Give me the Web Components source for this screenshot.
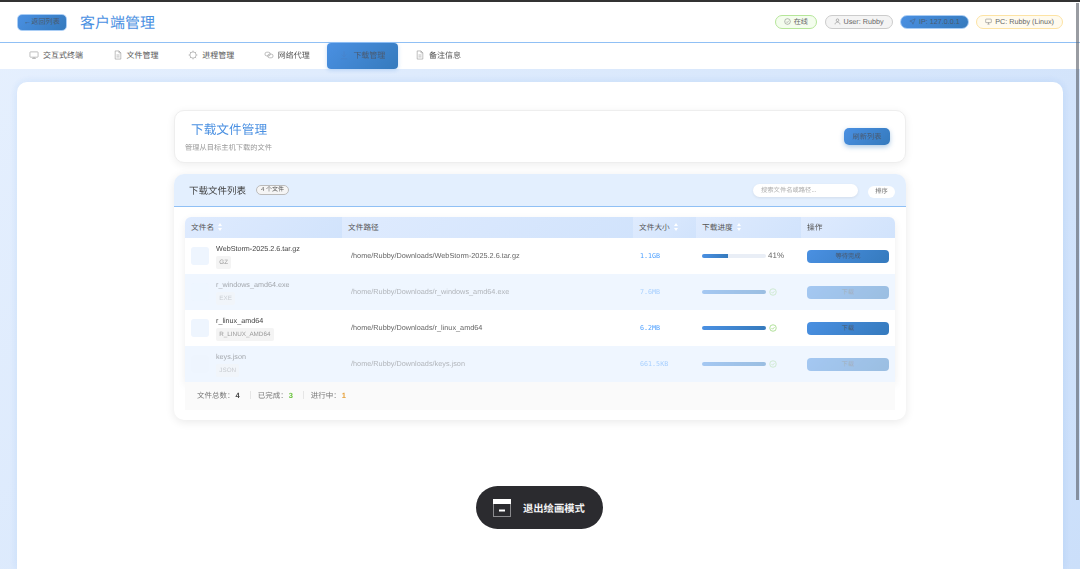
<!DOCTYPE html>
<html lang="zh-CN">
<head>
<meta charset="utf-8">
<title>客户端管理</title>
<style>
  html, body { margin: 0; height: 569px; overflow: hidden; }
  body {
    font-family: "Liberation Sans", "Noto Sans CJK SC", sans-serif;
    text-rendering: geometricPrecision;
    color: #333;
    background: linear-gradient(135deg, #e6f0fe, #cbdffa);
    border-top: 2px solid #333;
    box-sizing: border-box;
  }
</style>
</head>
<body>
<client-header></client-header>
<client-tabs></client-tabs>
<main-panel>
  <title-card></title-card>
  <list-card count="4 个文件">
    <file-row name="WebStorm-2025.2.6.tar.gz" ext="GZ" path="/home/Rubby/Downloads/WebStorm-2025.2.6.tar.gz" size="1.1GB" progress="41" action="等待完成"></file-row>
    <file-row muted name="r_windows_amd64.exe" ext="EXE" path="/home/Rubby/Downloads/r_windows_amd64.exe" size="7.6MB" progress="100" action="下载"></file-row>
    <file-row name="r_linux_amd64" ext="R_LINUX_AMD64" path="/home/Rubby/Downloads/r_linux_amd64" size="6.2MB" progress="100" action="下载"></file-row>
    <file-row muted name="keys.json" ext="JSON" path="/home/Rubby/Downloads/keys.json" size="661.5KB" progress="100" action="下载"></file-row>
  </list-card>
</main-panel>
<draw-pill></draw-pill>
<page-scrollbar></page-scrollbar>
<script>
/**
 * Small line icons, 16x16 viewBox, shared by the components.
 */
const icons = {
  monitor: '<rect x="1.5" y="3" width="13" height="8.500" rx="1"/><path d="M5 13.500h6M8 11.500v2"/>',
  doc: '<path d="M3.500 1.500h6l3 3v10h-9zM9.500 1.500v3h3M5.500 8h5M5.500 11h5"/>',
  chip: '<circle cx="8" cy="8" r="5"/><path d="M8 1v2M8 13v2M1 8h2M13 8h2M3 3l1.500 1.500M11.500 11.500L13 13M3 13l1.500-1.500M11.500 4.500L13 3"/>',
  link: '<rect x="1.500" y="3.500" width="8.500" height="6" rx="3"/><rect x="6" y="6.500" width="8.500" height="6" rx="3"/>',
  down: '<path d="M8 2v9M4.500 7.500L8 11l3.500-3.500M3 14h10"/>',
  check: '<circle cx="8" cy="8" r="6.500"/><path d="M5 8.200l2.200 2.200L11 6.300"/>',
  user: '<circle cx="8" cy="5" r="3"/><path d="M2.500 14.500c0-3.500 2.500-5 5.500-5s5.500 1.500 5.500 5"/>',
  send: '<path d="M14 2L2 7l5 2 2 5z"/>',
  pc: '<rect x="1.500" y="2.500" width="13" height="8" rx="1"/><path d="M5.500 14h5M8 10.500V14"/>'
}

/**
 * Returns an inline svg string for one of the icons.
 *
 * @param {string} name The icon name.
 * @returns {string} The svg markup.
 */
const icon = (name) => `<svg viewBox="0 0 16 16" fill="none" stroke="currentColor" stroke-width="1">${icons[name]}</svg>`

customElements.define('status-tag',
  class extends HTMLElement {
    constructor () {
      super()
      this.attachShadow({ mode: 'open' }).innerHTML = `
        <style>
          :host {
            display: flex; align-items: center; gap: 3px; height: 14px; padding: 0 8px;
            border-radius: 7px; border: 1px solid #ccc; box-sizing: border-box;
            font-size: 7.200px; color: #666; background: #f4f4f4; white-space: nowrap;
          }
          :host([kind=ok]) { background: #f4fdee; border-color: #b6e69a; }
          :host([kind=ip]) { background: linear-gradient(135deg, #4a90e2, #357abd); border-color: #a9cdf5; color: #4a5a70; }
          :host([kind=warn]) { background: #fffbef; border-color: #fde3a4; }
          svg { width: 7px; height: 7px; margin-top: -1px; }
          span { margin-top: -1px; }
        </style>
        ${icon(this.getAttribute('icon'))}<span><slot></slot></span>`
    }
  }
)

customElements.define('client-header',
  class extends HTMLElement {
    constructor () {
      super()
      this.attachShadow({ mode: 'open' }).innerHTML = `
        <style>
          :host {
            display: flex; align-items: center; height: 41px; padding: 0 17px; box-sizing: border-box;
            background: #fff; border-bottom: 1px solid #90c0f5; opacity: .999;
          }
          .back {
            width: 50px; height: 17px; border-radius: 5px; font-size: 7.200px; color: #4a5a70;
            background: linear-gradient(135deg, #4a90e2, #357abd); border: 1px solid #a9cdf5; box-sizing: border-box;
            display: flex; align-items: center; justify-content: center; margin-right: 13px; white-space: nowrap;
          }
          h1 { margin: 0; font-size: 15px; font-weight: 400; color: #4a90e2; }
          .tags { margin-left: auto; display: flex; gap: 7.500px; }
        </style>
        <div class="back">←返回列表</div>
        <h1>客户端管理</h1>
        <div class="tags">
          <status-tag kind="ok" icon="check">在线</status-tag>
          <status-tag icon="user">User: Rubby</status-tag>
          <status-tag kind="ip" icon="send">IP: 127.0.0.1</status-tag>
          <status-tag kind="warn" icon="pc">PC: Rubby (Linux)</status-tag>
        </div>`
    }
  }
)

customElements.define('client-tabs',
  class extends HTMLElement {
    constructor () {
      super()
      const tabs = [['monitor', '交互式终端'], ['doc', '文件管理'], ['chip', '进程管理'], ['link', '网络代理'], ['down', '下载管理', true], ['doc', '备注信息']]
      this.attachShadow({ mode: 'open' }).innerHTML = `
        <style>
          :host {
            display: flex; gap: 4.600px; height: 26px; padding: 0 17px; box-sizing: border-box;
            background: #fff; font-size: 8px; color: #555; opacity: .999;
          }
          .tab { display: flex; align-items: center; gap: 4px; padding: 0 13px 2px 12px; white-space: nowrap; }
          .tab.on {
            background: linear-gradient(135deg, #4a90e2, #357abd); border-radius: 4px; color: #4a5a70;
            box-shadow: 0 1px 4px rgba(74, 144, 226, .3);
          }
          svg { width: 10px; height: 10px; color: #999; }
          .on svg { color: #4a82c8; }
        </style>
        ${tabs.map(([i, t, on]) => `<div class="tab${on ? ' on' : ''}">${icon(i)}${t}</div>`).join('')}`
    }
  }
)

customElements.define('main-panel',
  class extends HTMLElement {
    constructor () {
      super()
      this.attachShadow({ mode: 'open' }).innerHTML = `
        <style>
          :host {
            display: flex; flex-direction: column; gap: 11px; margin: 13px 17px 0; height: 487px;
            padding: 28px 157px 0; box-sizing: border-box; background: #fff; border-radius: 10px 10px 0 0;
            box-shadow: 0 0 8px rgba(74, 144, 226, .14); opacity: .999;
          }
        </style>
        <slot></slot>`
    }
  }
)

customElements.define('title-card',
  class extends HTMLElement {
    constructor () {
      super()
      this.attachShadow({ mode: 'open' }).innerHTML = `
        <style>
          :host {
            display: flex; align-items: center; justify-content: space-between; height: 53px;
            padding: 0 15px 0 10px; box-sizing: border-box; background: #fff; border-radius: 10px;
            border: 1px solid #eee; box-shadow: 0 2px 8px rgba(0, 0, 0, .07);
          }
          h2 { margin: 1px 0 3px 6px; font-size: 12.700px; line-height: 17px; font-weight: 400; color: #4a90e2; }
          p { margin: 0; font-size: 7.250px; line-height: 11px; color: #999; }
          .refresh {
            width: 46px; height: 17px; border-radius: 5px; font-size: 7.200px; color: #4a5a70;
            background: linear-gradient(135deg, #4a90e2, #357abd);
            display: flex; align-items: center; justify-content: center;
            box-shadow: 0 2px 5px rgba(53, 122, 189, .4);
          }
        </style>
        <div><h2>下载文件管理</h2><p>管理从目标主机下载的文件</p></div>
        <div class="refresh">刷新列表</div>`
    }
  }
)

customElements.define('list-card',
  class extends HTMLElement {
    constructor () {
      super()
      const head = [['文件名', 157, 1], ['文件路径', 291, 0], ['文件大小', 63, 1], ['下载进度', 105, 1], ['操作', 94, 0]]
      this.attachShadow({ mode: 'open' }).innerHTML = `
        <style>
          :host {
            display: block; height: 246px; background: #fff; border-radius: 10px; overflow: hidden;
            box-shadow: 0 2px 10px rgba(0, 0, 0, .09);
          }
          .top {
            display: flex; align-items: center; height: 33px; padding: 0 11px 0 15px; box-sizing: border-box;
            background: #e3effe; border-bottom: 1px solid #90c0f5;
          }
          h3 { margin: 0; font-size: 9.500px; font-weight: 400; color: #444; }
          .count {
            margin-left: 10px; height: 10px; line-height: 9px; padding: 0 4px; border-radius: 5px; font-size: 6px;
            border: 1px solid #bbb; background: #f5f5f5; color: #555; box-sizing: border-box;
          }
          .search {
            margin-left: auto; width: 105px; height: 13px; padding-left: 8px; box-sizing: border-box; border-radius: 6.500px;
            background: #fff; font-size: 6.300px; line-height: 13px; color: #aaa; box-shadow: 0 1px 3px rgba(0, 0, 0, .08);
          }
          .sort {
            margin: 4px 0 0 10px; width: 27px; height: 12px; border-radius: 6px; background: #fff; color: #666;
            font-size: 6.300px; line-height: 12px; text-align: center;
          }
          .body { padding: 10px 11px 0; }
          .table { border-radius: 6px 6px 0 0; box-shadow: 0 3px 8px rgba(0, 0, 0, .07); overflow: hidden; }
          .head { display: flex; height: 21px; font-size: 7.700px; color: #555; }
          .head div {
            display: flex; align-items: center; gap: 4px; padding: 0 0 1px 6px; box-sizing: border-box;
            background: linear-gradient(135deg, #dfebfe, #d1e3fc);
          }
          .head svg { width: 4px; height: 8px; }
          .foot {
            display: flex; align-items: center; height: 28px; padding: 0 0 1.500px 12px; box-sizing: border-box; background: #fafafa;
            font-size: 7.500px; color: #777;
          }
          .foot b { margin-left: 1px; color: #444; }
          .foot i { width: 1px; height: 8px; background: #e6e6e6; margin: 0 7px 0 10px; }
        </style>
        <div class="top">
          <h3>下载文件列表</h3><span class="count">${this.getAttribute('count')}</span>
          <div class="search">搜索文件名或路径...</div><div class="sort">排序</div>
        </div>
        <div class="body">
          <div class="table">
            <div class="head">${head.map(([t, w, s]) => `<div style="width:${w}px">${t}${s ? '<svg viewBox="0 0 4 8" fill="#fff"><path d="M2 0l2 3H0zM2 8L0 5h4z"/></svg>' : ''}</div>`).join('')}</div>
            <slot></slot>
          </div>
          <div class="foot">
            <span>文件总数：</span><b>4</b><i></i>
            <span>已完成：</span><b style="color:#67c23a">3</b><i></i>
            <span>进行中：</span><b style="color:#e6a23c">1</b>
          </div>
        </div>`
    }
  }
)

customElements.define('file-row',
  class extends HTMLElement {
    constructor () {
      super()
      const a = (n) => this.getAttribute(n)
      const progress = Number(a('progress'))
      this.attachShadow({ mode: 'open' }).innerHTML = `
        <style>
          :host {
            display: grid; grid-template-columns: 157px 291px 63px 105px 94px; height: 36px; align-items: center;
            background: #fff; font-size: 7.200px; color: #555;
          }
          :host([muted]) { background: #eff6ff; }
          :host([muted]) .cell { opacity: .45; }
          .name { display: flex; align-items: center; gap: 7px; padding-left: 6px; }
          .thumb { width: 18px; height: 18px; border-radius: 3px; background: #eef5fe; }
          .title { line-height: 10px; color: #444; white-space: nowrap; }
          .ext {
            display: inline-block; margin-top: 2px; padding: 0 3.300px; height: 13px; line-height: 13px; border-radius: 2px;
            background: #f4f4f4; color: #999; font-size: 6.300px;
          }
          .path { padding: 0 0 1px 9px; font-size: 7.300px; color: #666; white-space: nowrap; }
          .size { padding: 0 0 1px 7px; font: 6.700px "DejaVu Sans Mono", monospace; color: #4a9eff; }
          .progress { display: flex; align-items: center; gap: 2px; padding-left: 6px; }
          .bar { width: 64px; height: 4px; border-radius: 2px; background: #e9eef6; overflow: hidden; }
          .fill { height: 100%; background: linear-gradient(90deg, #4a90e2, #357abd); }
          .pct { color: #666; font-size: 8px; margin-bottom: 1px; }
          .progress svg { width: 8px; height: 8px; color: #67c23a; margin-left: 1px; }
          .btn {
            display: block; margin-left: 6px; width: 82px; height: 13px; line-height: 13px; text-align: center; border-radius: 4px;
            background: linear-gradient(135deg, #4a90e2, #357abd); color: #4a5a70; font-size: 6.300px;
          }
        </style>
        <div class="cell name">
          <div class="thumb"></div>
          <div><div class="title">${a('name')}</div><span class="ext">${a('ext')}</span></div>
        </div>
        <div class="cell path">${a('path')}</div>
        <div class="cell size">${a('size')}</div>
        <div class="cell progress">
          <div class="bar"><div class="fill" style="width:${progress}%"></div></div>
          ${progress < 100 ? `<span class="pct">${progress}%</span>` : icon('check')}
        </div>
        <div class="cell"><span class="btn">${a('action')}</span></div>`
    }
  }
)

customElements.define('draw-pill',
  class extends HTMLElement {
    constructor () {
      super()
      this.attachShadow({ mode: 'open' }).innerHTML = `
        <style>
          :host {
            position: fixed; left: 476px; top: 486px; width: 127px; height: 43px; box-sizing: border-box; padding-left: 17px;
            display: flex; align-items: center; gap: 12px; border-radius: 22px; background: #2b2b2f;
            color: #f4f4f4; font-size: 10.300px; font-weight: 700; white-space: nowrap;
          }
          svg { width: 18px; height: 18px; }
        </style>
        <svg viewBox="0 0 18 18" fill="none" stroke="#8a8a8d" stroke-width="1">
          <rect x=".5" y=".5" width="17" height="17"/>
          <rect x="0" y="0" width="18" height="5" fill="#fff" stroke="none"/>
          <rect x="6" y="10.500" width="6" height="2" fill="#fff" stroke="none"/>
        </svg>
        退出绘画模式`
    }
  }
)

customElements.define('page-scrollbar',
  class extends HTMLElement {
    constructor () {
      super()
      this.attachShadow({ mode: 'open' }).innerHTML = `
        <style>
          :host {
            position: fixed; left: 1076px; top: 3px; width: 3px; height: 497px;
            background: rgba(85, 90, 100, .6);
          }
        </style>`
    }
  }
)
</script>
</body>
</html>
